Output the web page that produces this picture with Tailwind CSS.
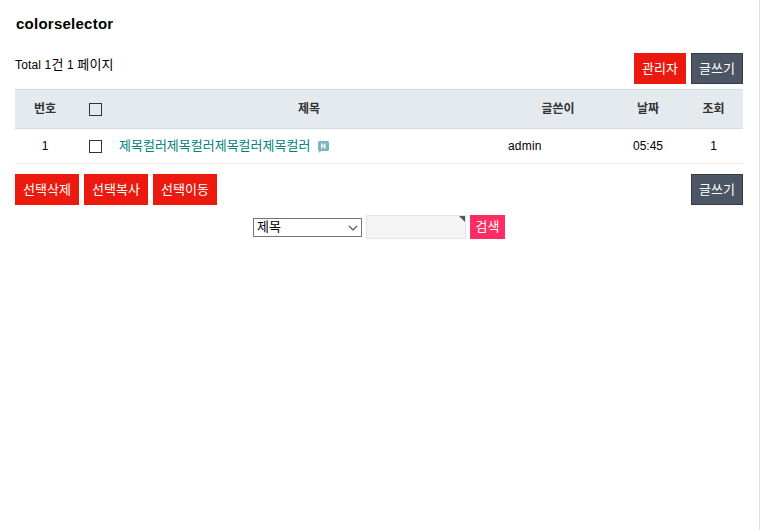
<!DOCTYPE html>
<html lang="ko">
<head>
<meta charset="utf-8">
<script src="https://cdn.jsdelivr.net/npm/@tailwindcss/browser@4"></script>
</head>
<body class="h-[530px] overflow-hidden bg-white text-black font-['Liberation_Sans','Noto_Sans_CJK_KR',sans-serif] text-[12px]">
<div class="flex h-[530px]">
<main class="w-[759px] pl-[15px] pr-[16px]">
  <h1 class="h-[48px] pt-[14px] pl-[1px] text-[15px] leading-[20px] font-bold tracking-[0.25px]">colorselector</h1>
  <div class="flex h-[41px] justify-between items-start pt-[5px]">
    <div class="pt-[4px] leading-[16px] tracking-[0.15px]">Total 1<span class="text-[13px]">건</span> 1 <span class="text-[13px]">페이지</span></div>
    <div class="flex gap-[5px] text-[13px]">
      <a class="flex h-[31px] w-[52px] items-center justify-center bg-[#ec1a0e] text-white">관리자</a>
      <a class="flex h-[31px] w-[52px] items-center justify-center bg-[#4b5563] border border-[#333b47] text-white">글쓰기</a>
    </div>
  </div>
  <div class="flex h-[40px] w-[728px] items-center bg-[#e4eaee] border-y border-[#d0dbe3] font-bold text-[#333]">
    <div class="w-[60px] text-center">번호</div>
    <div class="w-[41px] flex justify-center"><span class="block size-[13px] border border-[#333]"></span></div>
    <div class="flex-1 text-center pr-[6px]">제목</div>
    <div class="w-[100px] text-center">글쓴이</div>
    <div class="w-[80px] text-center">날짜</div>
    <div class="w-[55px] pr-[4px] text-center">조회</div>
  </div>
  <div class="flex h-[35px] w-[728px] items-center border-b border-[#e8e8e8]">
    <div class="w-[60px] text-center">1</div>
    <div class="w-[41px] flex justify-center"><span class="block size-[13px] border border-[#333]"></span></div>
    <div class="flex-1 flex items-center pl-[3px] text-[13px] text-[#008080]">
      <span>제목컬러제목컬러제목컬러제목컬러</span>
      <svg class="ml-[8px] mt-[1px]" width="11" height="12" viewBox="0 0 11 12"><path d="M1.500 0h8A1.500 1.500 0 0 1 11 1.500v7A1.500 1.500 0 0 1 9.500 10H3l-2 2v-2A1.500 1.500 0 0 1 0 8.500v-7A1.500 1.500 0 0 1 1.500 0z" fill="#7ab8bd"/><path d="M3 7.500v-5h1.200l2 3v-3H7.500v5H6.300l-2-3v3z" fill="#fff"/></svg>
    </div>
    <div class="w-[100px] tracking-[0.2px]">admin</div>
    <div class="w-[80px] text-center">05:45</div>
    <div class="w-[55px] pr-[4px] text-center">1</div>
  </div>
  <div class="flex justify-between pt-[10px] w-[728px] text-[13px]">
    <div class="flex gap-[5px]">
      <a class="flex h-[31px] w-[64px] items-center justify-center bg-[#ec1a0e] text-white">선택삭제</a>
      <a class="flex h-[31px] w-[64px] items-center justify-center bg-[#ec1a0e] text-white">선택복사</a>
      <a class="flex h-[31px] w-[64px] items-center justify-center bg-[#ec1a0e] text-white">선택이동</a>
    </div>
    <a class="flex h-[31px] w-[52px] items-center justify-center bg-[#4b5563] border border-[#333b47] text-white">글쓰기</a>
  </div>
  <div class="flex justify-center items-center gap-[4px] pt-[10px] w-[728px] text-[13px]">
    <div class="relative h-[19px] w-[109px] border border-[#767676] pl-[3px] leading-[15px]">제목
      <svg class="absolute right-[3px] top-[6px]" width="10" height="6" viewBox="0 0 10 6"><path d="M1 1l4 4 4-4" fill="none" stroke="#555" stroke-width="1.2"/></svg>
    </div>
    <div class="relative h-[24px] w-[100px] bg-[#f5f5f5] border border-[#e4e4e4]">
      <span class="absolute right-0 top-0 size-0 border-t-[6px] border-l-[6px] border-t-[#555] border-l-transparent"></span>
    </div>
    <a class="flex h-[24px] w-[35px] items-center justify-center bg-[#ff2d63] text-white">검색</a>
  </div>
</main>
<div class="w-[1px] h-full bg-[#e0e0e0]"></div>
</div>
</body>
</html>
